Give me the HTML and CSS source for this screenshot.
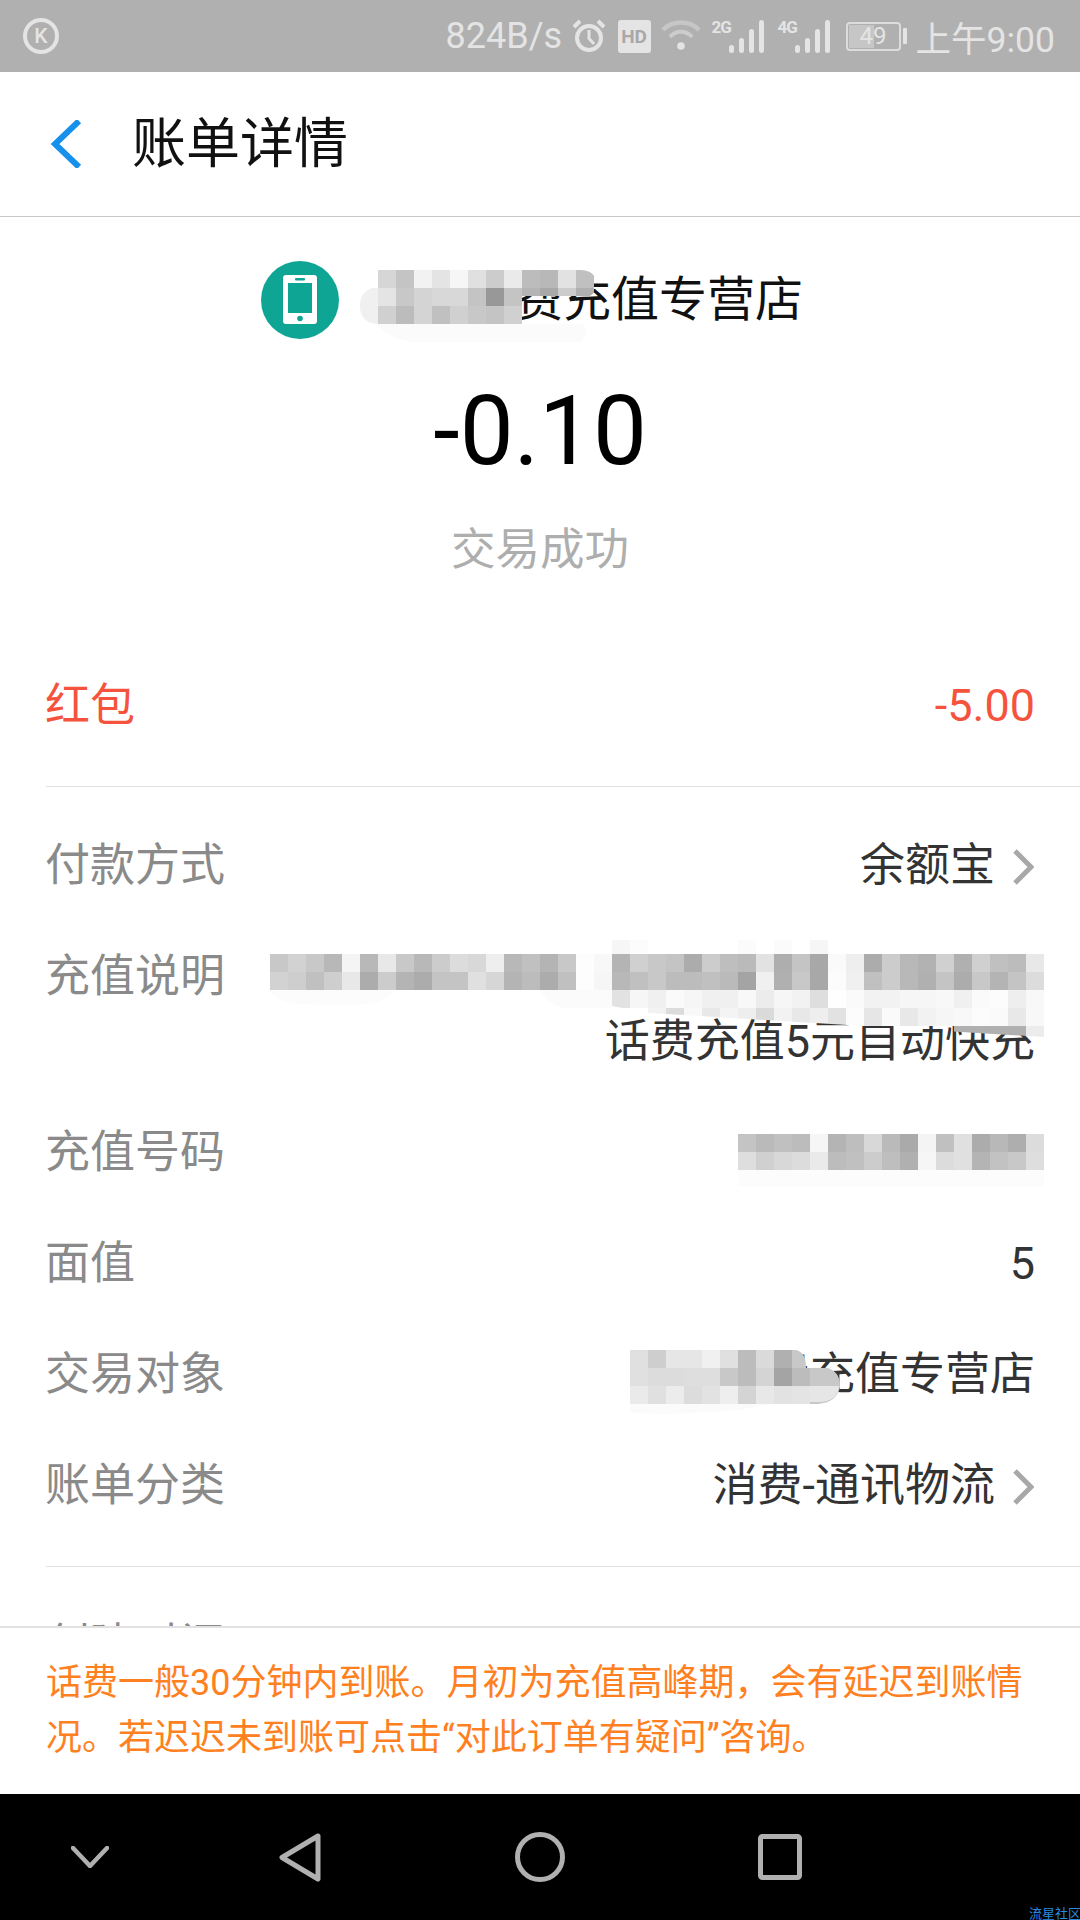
FILE: index.html
```html
<!DOCTYPE html>
<html lang="zh-CN">
<head>
<meta charset="utf-8">
<title>账单详情</title>
<link rel="stylesheet" href="styles.css">
</head>
<body>
<div class="screen">
  <div class="statusbar">
    <span class="k-badge">K</span>
    <div class="status-right">
      <span class="speed">824B/s</span>
      <svg class="ic-alarm" width="34" height="34" viewBox="0 0 34 34"><circle cx="17" cy="19" r="12" fill="none" stroke="#e4e4e4" stroke-width="4"/><path d="M17 11v8.500l5 5.500" fill="none" stroke="#e4e4e4" stroke-width="3"/><path d="M2 8l6-6M32 8l-6-6" stroke="#e4e4e4" stroke-width="4"/></svg>
      <span class="hd">HD</span>
      <svg class="ic-wifi" width="40" height="32" viewBox="0 0 40 32"><path d="M2 11C11 1 29 1 38 11" fill="none" stroke="#c6c6c6" stroke-width="4.500"/><path d="M9 18C15 11 25 11 31 18" fill="none" stroke="#cccccc" stroke-width="4"/><circle cx="20" cy="27" r="3.800" fill="#e4e4e4"/></svg>
      <span class="signal"><span class="net">2G</span><svg width="36" height="33" viewBox="0 0 36 33"><g fill="#e4e4e4"><rect x="0" y="25" width="5" height="8" rx="2.500"/><rect x="10" y="18" width="5" height="15" rx="2.500"/><rect x="20" y="9" width="5" height="24" rx="2.500"/><rect x="30" y="0" width="5" height="33" rx="2.500"/></g></svg></span>
      <span class="signal"><span class="net">4G</span><svg width="36" height="33" viewBox="0 0 36 33"><g fill="#e4e4e4"><rect x="0" y="25" width="5" height="8" rx="2.500"/><rect x="10" y="18" width="5" height="15" rx="2.500"/><rect x="20" y="9" width="5" height="24" rx="2.500"/><rect x="30" y="0" width="5" height="33" rx="2.500"/></g></svg></span>
      <span class="battery"><span class="battery-fill"></span><span class="battery-num">49</span></span>
      <span class="battery-tip"></span>
      <span class="clock">上午9:00</span>
    </div>
  </div>

  <header class="topbar">
    <svg class="back" width="33" height="48" viewBox="0 0 33 48"><path d="M30 1L6 24l24 23" fill="none" stroke="#1590ec" stroke-width="6"/></svg>
    <h1 class="title">账单详情</h1>
  </header>

  <main class="content">
    <div class="merchant">
      <svg class="merchant-icon" width="78" height="78" viewBox="0 0 78 78"><circle cx="39" cy="39" r="39" fill="#0ea594"/><rect x="22" y="14" width="34" height="49" rx="3" fill="#fff"/><rect x="27" y="22" width="24" height="30" fill="#0ea594"/><rect x="34" y="17" width="10" height="2.500" rx="1" fill="#0ea594"/><circle cx="39" cy="57.500" r="2.800" fill="#0ea594"/></svg>
      <span class="merchant-name">话费充值专营店</span>
    </div>
    <div class="amount">-0.10</div>
    <div class="state">交易成功</div>

    <div class="row row-red"><span>红包</span><span>-5.00</span></div>
    <div class="divider"></div>

    <div class="row"><span class="label">付款方式</span><span class="value">余额宝<svg class="arrow" width="22" height="36" viewBox="0 0 22 36"><path d="M3 2l16 16L3 34" fill="none" stroke="#a8a8a8" stroke-width="5"/></svg></span></div>
    <div class="row"><span class="label">充值说明</span><span class="value"><br>话费充值5元自动快充</span></div>
    <div class="row"><span class="label">充值号码</span><span class="value"></span></div>
    <div class="row"><span class="label">面值</span><span class="value">5</span></div>
    <div class="row"><span class="label">交易对象</span><span class="value">话费充值专营店</span></div>
    <div class="row"><span class="label">账单分类</span><span class="value">消费-通讯物流<svg class="arrow" width="22" height="36" viewBox="0 0 22 36"><path d="M3 2l16 16L3 34" fill="none" stroke="#a8a8a8" stroke-width="5"/></svg></span></div>
    <div class="divider"></div>
    <div class="row"><span class="label">创建时间</span><span class="value"></span></div>
  </main>

  <footer class="notice">话费一般30分钟内到账。月初为充值高峰期，会有延迟到账情况。若迟迟未到账可点击“对此订单有疑问”咨询。</footer>

  <nav class="navbar">
    <svg width="38" height="22" viewBox="0 0 38 22"><path d="M2 2l17 18L36 2" fill="none" stroke="#b0b0b0" stroke-width="4.500" stroke-linecap="round" stroke-linejoin="round"/></svg>
    <svg width="42" height="49" viewBox="0 0 42 49"><path d="M39 3L3 24.500 39 46z" fill="none" stroke="#b0b0b0" stroke-width="5" stroke-linejoin="round"/></svg>
    <svg width="50" height="50" viewBox="0 0 50 50"><circle cx="25" cy="25" r="22.500" fill="none" stroke="#b0b0b0" stroke-width="5"/></svg>
    <svg width="44" height="46" viewBox="0 0 44 46"><rect x="2.500" y="2.500" width="39" height="41" rx="2" fill="none" stroke="#b0b0b0" stroke-width="5"/></svg>
  </nav>
  <span class="watermark">流星社区</span>

  <svg class="mosaic" width="1080" height="1920" viewBox="0 0 1080 1920">
    <defs>
      <clipPath id="cut"><path d="M270 940H1044V1037L650 1013 612 1006 612 1008H270z"/></clipPath>
      <clipPath id="roundA"><path d="M378 270H580Q596 270 596 284Q596 300 578 296L522 296V324H378z"/></clipPath>
    </defs>

    <!-- merchant -->
    <path d="M378 288H372Q360 292 360 306Q360 322 376 324H378z" fill="#f0f0f0"/>
    <path d="M378 324H582Q592 332 580 342H410Q390 338 378 326z" fill="#fbfbfb"/>
    <g class="cells" clip-path="url(#roundA)">
      <rect x="378" y="270" fill="#d6d6d6"/><rect x="396" y="270" fill="#c4c4c4"/><rect x="414" y="270" fill="#f2f2f2"/><rect x="432" y="270" fill="#e4e4e4"/><rect x="450" y="270" fill="#f6f6f6"/><rect x="468" y="270" fill="#e0e0e0"/><rect x="486" y="270" fill="#cccccc"/><rect x="504" y="270" fill="#eaeaea"/><rect x="522" y="270" fill="#bcbcbc"/><rect x="540" y="270" fill="#b8b8b8"/><rect x="558" y="270" fill="#e2e2e2"/><rect x="576" y="270" fill="#c0c0c0"/>
      <rect x="378" y="288" fill="#e4e4e4"/><rect x="396" y="288" fill="#c8c8c8"/><rect x="414" y="288" fill="#d4d4d4"/><rect x="432" y="288" fill="#d8d8d8"/><rect x="450" y="288" fill="#d8d8d8"/><rect x="468" y="288" fill="#c4c4c4"/><rect x="486" y="288" fill="#989898"/><rect x="504" y="288" fill="#c4c4c4"/><rect x="522" y="288" fill="#b4b4b4"/><rect x="540" y="288" fill="#a8a8a8"/><rect x="558" y="288" fill="#cccccc"/><rect x="576" y="288" fill="#b0b0b0"/>
      <rect x="378" y="306" fill="#d0d0d0"/><rect x="396" y="306" fill="#bcbcbc"/><rect x="414" y="306" fill="#d4d4d4"/><rect x="432" y="306" fill="#c0c0c0"/><rect x="450" y="306" fill="#d0d0d0"/><rect x="468" y="306" fill="#c8c8c8"/><rect x="486" y="306" fill="#c4c4c4"/><rect x="504" y="306" fill="#d0d0d0"/>
    </g>

    <!-- description -->
    <path d="M270 990H396Q380 1006 365 1004 Q346 1008 310 1004Q278 1006 270 990z" fill="#fcfcfc"/>
    <path d="M540 990H612V1008H576Q550 1010 540 990z" fill="#fbfbfb"/>
    <g class="cells" clip-path="url(#cut)">
      <rect x="612" y="936" fill="#f6f6f6"/><rect x="630" y="936" fill="#fcfcfc"/><rect x="738" y="936" fill="#fbfbfb"/><rect x="774" y="936" fill="#fbfbfb"/><rect x="810" y="936" fill="#f6f6f6"/>
      <rect x="270" y="954" fill="#c8c8c8"/><rect x="288" y="954" fill="#d2d2d2"/><rect x="306" y="954" fill="#c8c8c8"/><rect x="324" y="954" fill="#b8b8b8"/><rect x="342" y="954" fill="#f4f4f4"/><rect x="360" y="954" fill="#b8b8b8"/><rect x="378" y="954" fill="#e8e8e8"/><rect x="396" y="954" fill="#c8c8c8"/><rect x="414" y="954" fill="#b8b8b8"/><rect x="432" y="954" fill="#cccccc"/><rect x="450" y="954" fill="#dcdcdc"/><rect x="468" y="954" fill="#d8d8d8"/><rect x="486" y="954" fill="#eeeeee"/><rect x="504" y="954" fill="#b8b8b8"/><rect x="522" y="954" fill="#c0c0c0"/><rect x="540" y="954" fill="#b4b4b4"/><rect x="558" y="954" fill="#c8c8c8"/><rect x="576" y="954" fill="#fdfdfd"/><rect x="594" y="954" fill="#f8f8f8"/><rect x="612" y="954" fill="#b4b4b4"/><rect x="630" y="954" fill="#d0d0d0"/><rect x="648" y="954" fill="#c8c8c8"/><rect x="666" y="954" fill="#c4c4c4"/><rect x="684" y="954" fill="#acacac"/><rect x="702" y="954" fill="#cccccc"/><rect x="720" y="954" fill="#bebebe"/><rect x="738" y="954" fill="#bababa"/><rect x="756" y="954" fill="#e2e2e2"/><rect x="774" y="954" fill="#aeaeae"/><rect x="792" y="954" fill="#c4c4c4"/><rect x="810" y="954" fill="#a8a8a8"/><rect x="828" y="954" fill="#fafafa"/><rect x="846" y="954" fill="#eeeeee"/><rect x="864" y="954" fill="#acacac"/><rect x="882" y="954" fill="#cccccc"/><rect x="900" y="954" fill="#b8b8b8"/><rect x="918" y="954" fill="#b2b2b2"/><rect x="936" y="954" fill="#d0d0d0"/><rect x="954" y="954" fill="#b0b0b0"/><rect x="972" y="954" fill="#d0d0d0"/><rect x="990" y="954" fill="#c0c0c0"/><rect x="1008" y="954" fill="#bcbcbc"/><rect x="1026" y="954" fill="#e8e8e8"/>
      <rect x="270" y="972" fill="#d2d2d2"/><rect x="288" y="972" fill="#cecece"/><rect x="306" y="972" fill="#c0c0c0"/><rect x="324" y="972" fill="#cecece"/><rect x="342" y="972" fill="#e8e8e8"/><rect x="360" y="972" fill="#acacac"/><rect x="378" y="972" fill="#cccccc"/><rect x="396" y="972" fill="#b4b4b4"/><rect x="414" y="972" fill="#acacac"/><rect x="432" y="972" fill="#c4c4c4"/><rect x="450" y="972" fill="#c4c4c4"/><rect x="468" y="972" fill="#e0e0e0"/><rect x="486" y="972" fill="#d6d6d6"/><rect x="504" y="972" fill="#b4b4b4"/><rect x="522" y="972" fill="#bcbcbc"/><rect x="540" y="972" fill="#acacac"/><rect x="558" y="972" fill="#c0c0c0"/><rect x="576" y="972" fill="#fdfdfd"/><rect x="594" y="972" fill="#f6f6f6"/><rect x="612" y="972" fill="#b8b8b8"/><rect x="630" y="972" fill="#c0c0c0"/><rect x="648" y="972" fill="#c8c8c8"/><rect x="666" y="972" fill="#bcbcbc"/><rect x="684" y="972" fill="#bcbcbc"/><rect x="702" y="972" fill="#c0c0c0"/><rect x="720" y="972" fill="#bababa"/><rect x="738" y="972" fill="#a4a4a4"/><rect x="756" y="972" fill="#f0f0f0"/><rect x="774" y="972" fill="#b0b0b0"/><rect x="792" y="972" fill="#c8c8c8"/><rect x="810" y="972" fill="#a8a8a8"/><rect x="828" y="972" fill="#fcfcfc"/><rect x="846" y="972" fill="#f0f0f0"/><rect x="864" y="972" fill="#c0c0c0"/><rect x="882" y="972" fill="#cccccc"/><rect x="900" y="972" fill="#b8b8b8"/><rect x="918" y="972" fill="#b0b0b0"/><rect x="936" y="972" fill="#c4c4c4"/><rect x="954" y="972" fill="#acacac"/><rect x="972" y="972" fill="#c8c8c8"/><rect x="990" y="972" fill="#b4b4b4"/><rect x="1008" y="972" fill="#c4c4c4"/><rect x="1026" y="972" fill="#dcdcdc"/>
      <rect x="612" y="990" fill="#e2e2e2"/><rect x="630" y="990" fill="#f6f6f6"/><rect x="648" y="990" fill="#f0f0f0"/><rect x="666" y="990" fill="#fafafa"/><rect x="684" y="990" fill="#f6f6f6"/><rect x="702" y="990" fill="#f0f0f0"/><rect x="720" y="990" fill="#f0f0f0"/><rect x="738" y="990" fill="#f8f8f8"/><rect x="756" y="990" fill="#ececec"/><rect x="774" y="990" fill="#f6f6f6"/><rect x="792" y="990" fill="#f2f2f2"/><rect x="810" y="990" fill="#dedede"/><rect x="828" y="990" fill="#fefefe"/><rect x="846" y="990" fill="#fafafa"/><rect x="864" y="990" fill="#f2f2f2"/><rect x="882" y="990" fill="#f2f2f2"/><rect x="900" y="990" fill="#f6f6f6"/><rect x="918" y="990" fill="#f6f6f6"/><rect x="936" y="990" fill="#f8f8f8"/><rect x="954" y="990" fill="#f0f0f0"/><rect x="972" y="990" fill="#fafafa"/><rect x="990" y="990" fill="#fcfcfc"/><rect x="1008" y="990" fill="#eeeeee"/><rect x="1026" y="990" fill="#f8f8f8"/>
      <rect x="648" y="1008" fill="#f2f2f2"/><rect x="666" y="1008" fill="#dcdcdc"/><rect x="684" y="1008" fill="#f8f8f8"/><rect x="702" y="1008" fill="#e8e8e8"/><rect x="720" y="1008" fill="#f4f4f4"/><rect x="738" y="1008" fill="#eeeeee"/><rect x="756" y="1008" fill="#dadada"/><rect x="774" y="1008" fill="#f2f2f2"/><rect x="792" y="1008" fill="#e8e8e8"/><rect x="810" y="1008" fill="#eeeeee"/><rect x="828" y="1008" fill="#e2e2e2"/><rect x="846" y="1008" fill="#fcfcfc"/><rect x="864" y="1008" fill="#e6e6e6"/><rect x="882" y="1008" fill="#fafafa"/><rect x="900" y="1008" fill="#e8e8e8"/><rect x="918" y="1008" fill="#f2f2f2"/><rect x="936" y="1008" fill="#f6f6f6"/><rect x="954" y="1008" fill="#f8f8f8"/><rect x="972" y="1008" fill="#fcfcfc"/><rect x="990" y="1008" fill="#fafafa"/><rect x="1008" y="1008" fill="#e8e8e8"/><rect x="1026" y="1008" fill="#f8f8f8"/>
      <rect x="954" y="1026" fill="#b0b0b0"/><rect x="972" y="1026" fill="#b0b0b0"/><rect x="990" y="1026" fill="#b0b0b0"/><rect x="1008" y="1026" fill="#b0b0b0"/><rect x="1026" y="1026" fill="#ececec"/>
    </g>

    <!-- number -->
    <rect x="738" y="1170" width="306" height="16" fill="#fcfcfc"/>
    <g class="cells">
      <rect x="738" y="1134" fill="#c4c4c4"/><rect x="756" y="1134" fill="#bababa"/><rect x="774" y="1134" fill="#c0c0c0"/><rect x="792" y="1134" fill="#bcbcbc"/><rect x="810" y="1134" fill="#f6f6f6"/><rect x="828" y="1134" fill="#b4b4b4"/><rect x="846" y="1134" fill="#bebebe"/><rect x="864" y="1134" fill="#d8d8d8"/><rect x="882" y="1134" fill="#bababa"/><rect x="900" y="1134" fill="#aaaaaa"/><rect x="918" y="1134" fill="#f4f4f4"/><rect x="936" y="1134" fill="#c0c0c0"/><rect x="954" y="1134" fill="#e0e0e0"/><rect x="972" y="1134" fill="#acacac"/><rect x="990" y="1134" fill="#b8b8b8"/><rect x="1008" y="1134" fill="#aeaeae"/><rect x="1026" y="1134" fill="#dcdcdc"/>
      <rect x="738" y="1152" fill="#dedede"/><rect x="756" y="1152" fill="#d0d0d0"/><rect x="774" y="1152" fill="#d8d8d8"/><rect x="792" y="1152" fill="#dcdcdc"/><rect x="810" y="1152" fill="#eaeaea"/><rect x="828" y="1152" fill="#bcbcbc"/><rect x="846" y="1152" fill="#c0c0c0"/><rect x="864" y="1152" fill="#cccccc"/><rect x="882" y="1152" fill="#bebebe"/><rect x="900" y="1152" fill="#b0b0b0"/><rect x="918" y="1152" fill="#f6f6f6"/><rect x="936" y="1152" fill="#dcdcdc"/><rect x="954" y="1152" fill="#e0e0e0"/><rect x="972" y="1152" fill="#b4b4b4"/><rect x="990" y="1152" fill="#c2c2c2"/><rect x="1008" y="1152" fill="#c8c8c8"/><rect x="1026" y="1152" fill="#dedede"/>
    </g>

    <!-- counterparty -->
    <path d="M630 1404H770Q740 1412 700 1412Q660 1416 630 1412z" fill="#fbfbfb"/>
    <path d="M792 1350H796Q806 1352 806 1368H828Q840 1372 840 1386Q838 1402 818 1404H790z" fill="#c8c8c8"/>
    <g class="cells">
      <rect x="630" y="1350" fill="#e0e0e0"/><rect x="648" y="1350" fill="#cecece"/><rect x="666" y="1350" fill="#e6e6e6"/><rect x="684" y="1350" fill="#e6e6e6"/><rect x="702" y="1350" fill="#f0f0f0"/><rect x="720" y="1350" fill="#e0e0e0"/><rect x="738" y="1350" fill="#bcbcbc"/><rect x="756" y="1350" fill="#dadada"/><rect x="774" y="1350" fill="#b0b0b0"/>
      <rect x="630" y="1368" fill="#e0e0e0"/><rect x="648" y="1368" fill="#dcdcdc"/><rect x="666" y="1368" fill="#dcdcdc"/><rect x="684" y="1368" fill="#dedede"/><rect x="702" y="1368" fill="#dedede"/><rect x="720" y="1368" fill="#c8c8c8"/><rect x="738" y="1368" fill="#bcbcbc"/><rect x="756" y="1368" fill="#d4d4d4"/><rect x="774" y="1368" fill="#a4a4a4"/><rect x="792" y="1368" fill="#bcbcbc"/>
      <rect x="630" y="1386" fill="#eaeaea"/><rect x="648" y="1386" fill="#e0e0e0"/><rect x="666" y="1386" fill="#ececec"/><rect x="684" y="1386" fill="#dcdcdc"/><rect x="702" y="1386" fill="#e2e2e2"/><rect x="720" y="1386" fill="#eeeeee"/><rect x="738" y="1386" fill="#d4d4d4"/><rect x="756" y="1386" fill="#e8e8e8"/><rect x="774" y="1386" fill="#e2e2e2"/><rect x="792" y="1386" fill="#e4e4e4"/>
    </g>
    <path d="M810 1386H839Q838 1402 818 1402H810z" fill="#e6e6e6"/>
  </svg>
</div>
</body>
</html>
```

FILE: styles.css
```css
* { box-sizing: border-box; }
html, body { margin: 0; padding: 0; background: #fff; }
body { font-family: Roboto, "Noto Sans CJK SC", sans-serif; }

.screen {
  position: relative;
  width: 1080px;
  height: 1920px;
  overflow: hidden;
  display: flex;
  flex-direction: column;
  background: #fff;
}

/* status bar */
.statusbar {
  flex: none;
  height: 72px;
  background: #b0b0b0;
  color: #e4e4e4;
  display: flex;
  align-items: center;
  justify-content: space-between;
  padding: 0 25px 0 23px;
}
.k-badge {
  width: 36px;
  height: 36px;
  border: 4px solid #e4e4e4;
  border-radius: 50%;
  font-size: 21px;
  font-weight: 500;
  line-height: 28px;
  text-align: center;
}
.status-right { display: flex; align-items: center; height: 72px; }
.speed { font-size: 36px; width: 126px; }
.ic-alarm { flex: none; }
.hd {
  width: 33px;
  height: 33px;
  margin-left: 12px;
  background: #e4e4e4;
  border-radius: 3px;
  color: #a8a8a8;
  font-size: 19px;
  font-weight: 700;
  line-height: 33px;
  text-align: center;
}
.ic-wifi { margin-left: 10px; margin-top: -2px; }
.signal { display: flex; align-items: flex-end; height: 33px; margin-left: 11px; }
.signal + .signal { margin-left: 13px; }
.net {
  align-self: flex-start;
  width: 17px;
  font-size: 17px;
  font-weight: 700;
  letter-spacing: -1px;
  line-height: 15px;
}
.battery {
  position: relative;
  width: 55px;
  height: 29px;
  margin-left: 15px;
  border: 2px solid #dcdcdc;
  border-radius: 4px;
  text-align: center;
}
.battery-fill {
  position: absolute;
  left: 1px;
  top: 1px;
  bottom: 1px;
  width: 25px;
  background: #c6c6c6;
}
.battery-num {
  position: relative;
  display: block;
  font-size: 24px;
  line-height: 25px;
}
.battery-tip {
  width: 4px;
  height: 16px;
  margin-left: 2px;
  background: #e4e4e4;
  border-radius: 1px;
}
.clock { font-size: 35.5px; margin-left: 9px; }

/* title bar */
.topbar {
  flex: none;
  height: 145px;
  display: flex;
  align-items: center;
  gap: 50px;
  padding-left: 49px;
  border-bottom: 1px solid #c8c8c8;
}
.title {
  margin: 2px 0 0;
  font-size: 54px;
  font-weight: 400;
  color: #111;
  line-height: 64px;
}

/* content */
.content {
  flex: 1;
  min-height: 0;
  overflow: hidden;
}
.merchant {
  display: flex;
  align-items: center;
  height: 78px;
  margin-top: 44px;
  padding-left: 261px;
  gap: 128px;
}
.merchant-name {
  font-size: 48px;
  color: #111;
  line-height: 74px;
}
.amount {
  height: 110px;
  margin-top: 37px;
  font-size: 96px;
  line-height: 110px;
  text-align: center;
  color: #000;
}
.state {
  height: 60px;
  margin-top: 34px;
  font-size: 44.5px;
  line-height: 60px;
  text-align: center;
  color: #aeaeae;
}
.row {
  display: flex;
  justify-content: space-between;
  padding: 23px 45px 23px 45px;
  font-size: 45px;
  line-height: 65px;
}
.row-red { margin-top: 70px; color: #f5533d; }
.divider {
  height: 1px;
  margin: 25px 0 23px 46px;
  background: #e2e2e2;
}
.label { color: #8a8a8a; }
.value {
  display: block;
  text-align: right;
  color: #333;
}
.arrow { margin-left: 17px; margin-right: 1px; vertical-align: -4px; }

/* notice */
.notice {
  flex: none;
  height: 168px;
  padding: 28px 46px 0;
  border-top: 2px solid #e2e2e2;
  background: #fff;
  color: #ff8020;
  font-size: 36px;
  line-height: 55px;
}

/* navigation */
.navbar {
  flex: none;
  height: 126px;
  background: #000;
  display: grid;
  grid-template-columns: 180px 240px 240px 240px 1fr;
  justify-items: center;
  align-items: center;
}
.watermark {
  position: absolute;
  right: -1px;
  bottom: -2px;
  color: #2a8ae0;
  font-size: 13px;
  line-height: 16px;
}

/* privacy mosaic painted on top of the page */
.mosaic {
  position: absolute;
  left: 0;
  top: 0;
  pointer-events: none;
}
.cells rect { width: 18px; height: 18px; }
```
